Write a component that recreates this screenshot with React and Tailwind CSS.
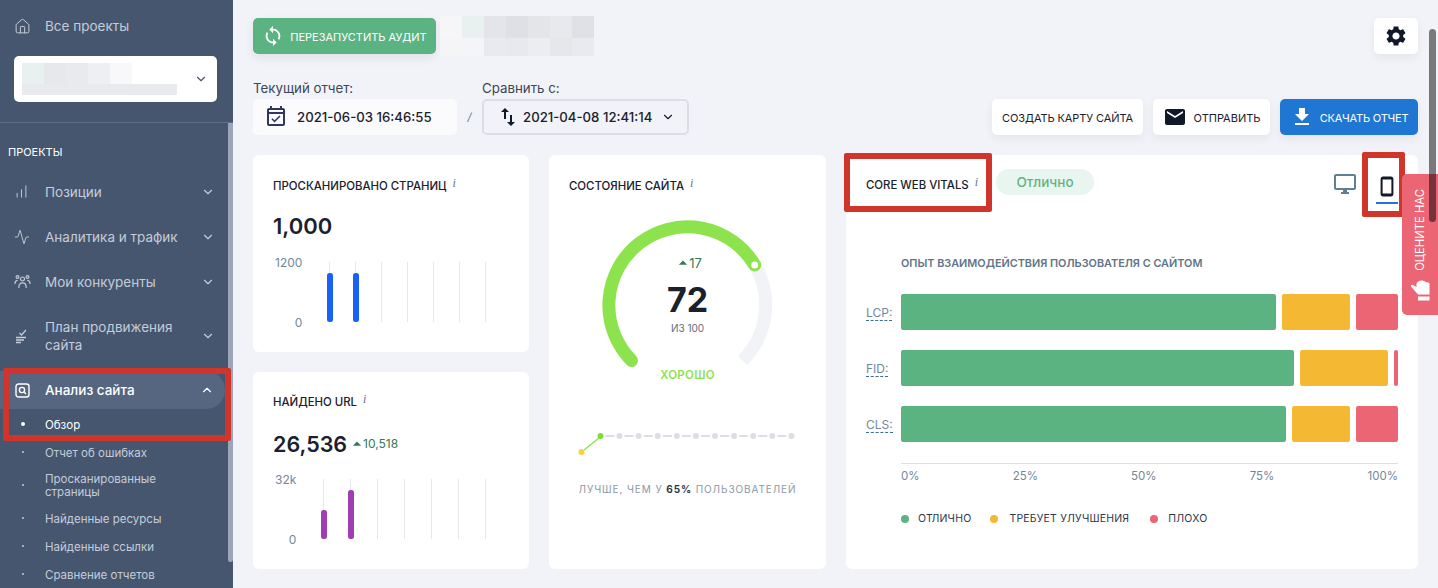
import React from "react";
import { Home, ChartNoAxesColumnIncreasing, Activity, ChevronDown, ChevronUp } from "lucide-react";
import { MdSync, MdSettings, MdEmail, MdFileDownload, MdOutlineDesktopWindows, MdOutlineEventAvailable, MdSwapVert, MdArrowDropUp } from "react-icons/md";

const Info = () => <i className="ml-[6px] relative -top-[3px] text-[12px] font-['Liberation_Serif',serif] text-[#5f7488]">i</i>;

const PlanIcon = () => (
  <svg width="16" height="16" viewBox="0 0 16 16" fill="none" stroke="#c3ccd8" strokeWidth="1.3">
    <path d="M5.5 5 L7.5 7 L12 2" />
    <path d="M2 9.5 H12 M2 12 H10 M2 14.5 H7" />
  </svg>
);

const PeopleIcon = () => (
  <svg width="17" height="16" viewBox="0 0 17 16" fill="none" stroke="#c3ccd8" strokeWidth="1.2" strokeLinecap="round">
    <circle cx="8.5" cy="5" r="2" />
    <circle cx="3.5" cy="3" r="1.4" />
    <circle cx="13.5" cy="3" r="1.4" />
    <path d="M4.8 13.5 C4.8 10.5 6.3 8.8 8.5 8.8 C10.7 8.8 12.2 10.5 12.2 13.5" />
    <path d="M1 9.5 C1 7.5 1.8 6.5 3.2 6.3 M16 9.5 C16 7.5 15.2 6.5 13.8 6.3" />
  </svg>
);

const AuditIcon = () => (
  <svg width="15" height="15" viewBox="0 0 15 15" fill="none" stroke="#fff" strokeWidth="1.4">
    <rect x="1" y="1" width="13" height="13" rx="2.5" />
    <circle cx="7" cy="7" r="2.6" />
    <path d="M9 9 L11 11" />
  </svg>
);

const PhoneIcon = () => (
  <svg width="14" height="21" viewBox="0 0 14 21">
    <path fillRule="evenodd" fill="#111827" d="M3 0.5 H11 C12.4 0.5 13.4 1.5 13.4 3 V18 C13.4 19.5 12.4 20.5 11 20.5 H3 C1.6 20.5 0.6 19.5 0.6 18 V3 C0.6 1.5 1.6 0.5 3 0.5 Z M2.6 3.5 V17.5 H11.4 V3.5 Z" />
  </svg>
);

const HandIcon = () => (
  <svg width="21" height="24" viewBox="0 0 21 24" fill="#fff">
    <path d="M9 1 C11 0 14 0.5 16 2 L19.5 3 V14.5 H8 L1 6.5 C0.5 5.5 1.5 4.5 3 5 L6.5 7 L6.5 4 C6.5 2.5 8 1.5 9 1 Z" />
    <rect x="8" y="16.5" width="11.5" height="4" />
  </svg>
);

const NavItem = ({ icon, children, className = "h-[45px]" }) => (
  <div className={`flex items-center pl-[14px] pr-[18px] text-[#c3ccd8] ${className}`}>
    <span className="w-[31px] flex items-center">{icon}</span>
    <span className="flex-1 text-[13.5px] leading-[18px]">{children}</span>
    <ChevronDown size={14} strokeWidth={2} />
  </div>
);

const SubItem = ({ children, active, className = "h-[28px]" }) => (
  <div className={`flex items-center ${className} ${active ? "text-white" : "text-[#c3ccd8]"}`}>
    <span className="w-[45px] flex justify-center">
      <span className={`block rounded-full ${active ? "w-[4px] h-[4px] bg-white" : "w-[2px] h-[2px] bg-[#c3ccd8]"}`} />
    </span>
    <span className="text-[11.5px] leading-[13px] pt-[2px]">{children}</span>
  </div>
);

const Sidebar = () => (
  <aside className="relative w-[233px] h-[588px] shrink-0 bg-[#47566f] overflow-hidden">
    <div className="flex items-center h-[52px] pl-[14px] text-[#c3ccd8]">
      <span className="w-[31px]"><Home size={17} strokeWidth={1.4} /></span>
      <span className="text-[13.5px]">Все проекты</span>
    </div>
    <div className="ml-[14px] w-[203px] mt-[4px] h-[46px] bg-white rounded-[5px] flex items-center justify-between pl-[8px] pr-[9px]">
      <div className="flex flex-col w-[155px]">
        <div className="flex h-[21px]">
          <span className="w-[22px] bg-[#e8f0f0]" />
          <span className="w-[22px] bg-[#e7e8ec]" />
          <span className="w-[22px] bg-[#e9eaee]" />
          <span className="w-[22px] bg-[#eeeff2]" />
          <span className="w-[22px] bg-[#f8f8fa]" />
        </div>
        <div className="h-[11px] bg-[#e9eaee]" />
      </div>
      <ChevronDown size={14} strokeWidth={2} className="text-[#47566f]" />
    </div>
    <div className="mt-[20px] border-t border-[#5f6f89]" />
    <div className="relative">
      <div className="pl-[8px] pt-[21px] pb-[9px] h-[46px] text-[11px] leading-[16px] text-white">ПРОЕКТЫ</div>
      <NavItem icon={<ChartNoAxesColumnIncreasing size={15} strokeWidth={1.5} />}>Позиции</NavItem>
      <NavItem icon={<Activity size={16} strokeWidth={1.4} />}>Аналитика и трафик</NavItem>
      <NavItem icon={<PeopleIcon />}>Мои конкуренты</NavItem>
      <NavItem icon={<PlanIcon />} className="h-[63px]">План продвижения сайта</NavItem>
      <div className="h-[38px] mt-[4px] w-[225px] bg-[#566680] rounded-r-[20px] flex items-center pl-[15px] pr-[11px] text-white">
        <span className="w-[30px]"><AuditIcon /></span>
        <span className="flex-1 text-[13.5px] font-medium">Анализ сайта</span>
        <ChevronUp size={14} strokeWidth={2} />
      </div>
      <SubItem active className="h-[30px]">Обзор</SubItem>
      <SubItem className="h-[26px]">Отчет об ошибках</SubItem>
      <SubItem className="h-[39px]">Просканированные<br />страницы</SubItem>
      <SubItem>Найденные ресурсы</SubItem>
      <SubItem>Найденные ссылки</SubItem>
      <SubItem>Сравнение отчетов</SubItem>
    </div>
    <div className="absolute right-0 top-[123px] w-[5px] h-[439px] bg-[#9ba6b8] rounded-b-[3px]" />
  </aside>
);

const Pixels = () => (
  <div className="ml-[4px] -mt-[2px] grid grid-cols-[repeat(7,22px)] grid-rows-[22px_18px]">
    {["#f6f6f9","#e8f0f0","#e4e5ea","#dfe0e5","#e4e5e9","#e8e9ed","#e0e1e6","#f5f5f8","#f4f5f8","#e9eaee","#e8e9ed","#ecedf0","#e6e7eb","#e9eaee"].map((c, i) => (
      <span key={i} style={{ backgroundColor: c }} />
    ))}
  </div>
);

const CardTitle = ({ children }) => (
  <div className="text-[11.4px] leading-[16px] font-medium text-[#1a202c]">{children}<Info /></div>
);

const BarChart = ({ top, color, lines, bars, className }) => (
  <div className={`flex h-[60px] ${className}`}>
    <div className="flex flex-col justify-between text-[12px] leading-[12px] text-[#74879a] text-right -mt-[5px] ml-[2px] h-[72px]">
      <span>{top}</span>
      <span>0</span>
    </div>
    <svg width="180" height="60" viewBox="0 0 180 60" className="shrink-0 ml-auto">
      {lines.map((x) => <line key={x} x1={x} x2={x} y1="0" y2="60" stroke="#e6e7ea" strokeWidth="1" />)}
      {bars.map(([x, y]) => <rect key={x} x={x - 3} y={y} width="6" height={60 - y} rx="2.5" fill={color} />)}
    </svg>
  </div>
);

const Delta = ({ children, className }) => (
  <span className={`flex items-center text-[#347a55] ${className}`}>
    <MdArrowDropUp size={20} className="-mr-[4px]" />{children}
  </span>
);

const Gauge = () => (
  <svg width="190" height="170" viewBox="0 0 190 170" className="block">
    <path d="M 161.7 61 A 78.5 78.5 0 0 1 149.5 156.5" fill="none" stroke="#f2f3f7" strokeWidth="13" />
    <path d="M 38.5 156.5 A 78.5 78.5 0 1 1 161.7 61" fill="none" stroke="#8de34d" strokeWidth="13" strokeLinecap="round" />
    <circle cx="161.7" cy="61" r="3.5" fill="#fff" />
  </svg>
);

const Rank = () => (
  <svg width="222" height="30" viewBox="0 0 222 30" className="block">
    <line x1="7" y1="22" x2="22" y2="10" stroke="#8de34d" strokeWidth="1.5" />
    <circle cx="4.5" cy="24" r="3" fill="#fbd134" />
    <circle cx="23.5" cy="8" r="3" fill="#7fdc3c" />
    {Array.from({ length: 10 }).map((_, i) => (
      <rect key={i} x={28.5 + i * 19.1} y="7" width="9" height="2" fill="#dcdde6" />
    ))}
    {Array.from({ length: 10 }).map((_, i) => (
      <circle key={i} cx={42.5 + i * 19.1} cy="8" r="3" fill="#dcdde6" />
    ))}
  </svg>
);

const bars = [
  ["LCP:", 375, 68, 42],
  ["FID:", 393, 88, 4],
  ["CLS:", 385, 58, 42],
];

const Vitals = () => (
  <div className="bg-white rounded-[6px] h-[414px] pl-[20px] pr-[20px]">
    <div className="flex items-start h-[64px] pt-[14px]">
      <div className="pt-[8px]"><CardTitle>CORE WEB VITALS</CardTitle></div>
      <span className="ml-[18px] h-[26px] w-[98px] rounded-full bg-[#e9f6f0] text-[#5cb582] text-[13.5px] font-medium flex items-center justify-center">Отлично</span>
      <div className="ml-auto flex items-start">
        <span className="w-[22px] mt-[3px] flex justify-center"><MdOutlineDesktopWindows size={24} className="text-[#5f8090] shrink-0" /></span>
        <span className="ml-[20px] w-[22px] pt-[7px] flex flex-col items-center">
          <PhoneIcon />
          <span className="mt-[5px] block w-[22px] h-[2px] bg-[#1d76d3]" />
        </span>
      </div>
    </div>
    <div className="pl-[35px] mt-[37px] text-[10.85px] leading-[14px] font-semibold text-[#5f7488]">ОПЫТ ВЗАИМОДЕЙСТВИЯ ПОЛЬЗОВАТЕЛЯ С САЙТОМ</div>
    <div className="mt-[24px] flex flex-col gap-[20px]">
      {bars.map(([label, a, b, c]) => (
        <div key={label} className="flex items-center h-[36px]">
          <span className="w-[35px] pt-[2px] text-[12px] leading-[14px] text-[#74879a]"><span className="border-b border-dashed border-[#3f6c8f]">{label}</span></span>
          <div className="flex gap-[6px] h-full">
            <span className="bg-[#5bb381] rounded-[2px]" style={{ width: a }} />
            <span className="bg-[#f5b833] rounded-[2px]" style={{ width: b }} />
            <span className="bg-[#ec6574] rounded-[2px]" style={{ width: c }} />
          </div>
        </div>
      ))}
    </div>
    <div className="ml-[35px] mt-[21px] border-t border-[#dcdde6] flex justify-between pt-[5px] text-[11.5px] leading-[14px] text-[#74879a]">
      <span>0%</span><span>25%</span><span>50%</span><span>75%</span><span>100%</span>
    </div>
    <div className="ml-[35px] mt-[29px] flex items-center text-[10.5px] tracking-[0.2px] leading-[14px] text-[#2d3748]">
      <span className="w-[8px] h-[8px] rounded-full bg-[#5bb381]" /><span className="ml-[9px]">ОТЛИЧНО</span>
      <span className="ml-[19px] w-[8px] h-[8px] rounded-full bg-[#f5b833]" /><span className="ml-[11px]">ТРЕБУЕТ УЛУЧШЕНИЯ</span>
      <span className="ml-[21px] w-[8px] h-[8px] rounded-full bg-[#ec6574]" /><span className="ml-[10px]">ПЛОХО</span>
    </div>
  </div>
);

const ActionBtn = ({ children, className }) => (
  <button className={`h-[36px] rounded-[5px] flex items-center justify-center text-[11px] shadow-[0_4px_10px_rgba(30,40,70,0.06)] ${className}`}>{children}</button>
);

const Main = () => (
  <main className="flex-1 h-[588px] overflow-hidden bg-[#f2f3f8] px-[20px] pt-[18px]">
    <div className="flex h-[36px]">
      <button className="w-[183px] h-[36px] rounded-[5px] bg-[#5bb381] text-white text-[11px] flex items-center justify-center gap-[6px] shadow-[0_4px_10px_rgba(30,40,70,0.08)]">
        <MdSync size={22} /><span className="mt-[3px]">ПЕРЕЗАПУСТИТЬ АУДИТ</span>
      </button>
      <Pixels />
      <button className="ml-auto w-[44px] h-[36px] rounded-[5px] bg-white flex items-center justify-center shadow-[0_4px_10px_rgba(30,40,70,0.06)]">
        <MdSettings size={24} className="text-[#111827]" />
      </button>
    </div>
    <div className="flex items-end mt-[36px] h-[45px]">
      <div className="w-[204px]">
        <div className="text-[13.3px] leading-[19px] -mt-[1px] mb-[1px] text-[#3d4656]">Текущий отчет:</div>
        <div className="h-[36px] bg-[#fbfbfd] rounded-[5px] flex items-center pl-[11px] text-[13.2px] text-[#1a202c] font-medium">
          <MdOutlineEventAvailable size={24} className="text-[#2e3763] mr-[9px]" /><span className="mt-[2px]">2021-06-03 16:46:55</span>
        </div>
      </div>
      <span className="w-[25px] text-center h-[36px] flex items-center justify-center italic text-[11px] text-[#5f7488]">/</span>
      <div className="w-[207px]">
        <div className="text-[13.3px] leading-[19px] -mt-[1px] mb-[1px] text-[#3d4656]">Сравнить с:</div>
        <div className="h-[36px] rounded-[5px] border-2 border-[#dcdde6] flex items-center pl-[12px] pr-[12px] text-[13.2px] text-[#1a202c] font-medium">
          <MdSwapVert size={24} className="text-[#111827] mr-[3px]" />
          <span className="flex-1 mt-[2px]">2021-04-08 12:41:14</span>
          <ChevronDown size={14} strokeWidth={2} />
        </div>
      </div>
      <div className="ml-auto flex gap-[10px]">
        <ActionBtn className="w-[151px] bg-white text-[#1a202c]"><span className="mt-[3px] tracking-[-0.1px]">СОЗДАТЬ КАРТУ САЙТА</span></ActionBtn>
        <ActionBtn className="w-[117px] bg-white text-[#1a202c] gap-[7px]"><MdEmail size={24} className="text-[#111827]" /><span className="mt-[3px]">ОТПРАВИТЬ</span></ActionBtn>
        <ActionBtn className="w-[138px] bg-[#1f76d3] text-white gap-[6px]"><MdFileDownload size={24} /><span className="mt-[3px] tracking-[-0.2px]">СКАЧАТЬ ОТЧЕТ</span></ActionBtn>
      </div>
    </div>
    <div className="mt-[20px] grid grid-cols-[276px_277px_572px] gap-[20px]">
      <div className="flex flex-col gap-[20px]">
        <div className="h-[197px] bg-white rounded-[6px] pl-[20px] pr-[43px] pt-[23px]">
          <CardTitle>ПРОСКАНИРОВАНО СТРАНИЦ</CardTitle>
          <div className="mt-[17px] text-[22px] leading-[30px] font-semibold text-[#1a202c]">1,000</div>
          <BarChart className="mt-[21px] w-[213px]" top="1200" color="#1a62f5" lines={[23.5,49.5,75.5,101.5,127.5,153.5,179.5]} bars={[[24,11],[50,11]]} />
        </div>
        <div className="h-[197px] bg-white rounded-[6px] pl-[20px] pr-[43px] pt-[22px]">
          <CardTitle>НАЙДЕНО URL</CardTitle>
          <div className="mt-[19px] flex items-center">
            <span className="text-[21.5px] leading-[30px] font-semibold text-[#1a202c]">26,536</span>
            <Delta className="text-[12px]">10,518</Delta>
          </div>
          <BarChart className="mt-[20px] w-[213px]" top="32k" color="#a03db3" lines={[17.5,44.5,71.5,98.5,125.5,152.5,179.5]} bars={[[18,31],[45,11]]} />
        </div>
      </div>
      <div className="h-[414px] bg-white rounded-[6px] pt-[23px] flex flex-col items-center">
        <div className="self-start pl-[20px]"><CardTitle>СОСТОЯНИЕ САЙТА</CardTitle></div>
        <div className="relative mt-[10px] w-[190px] h-[170px]">
          <Gauge />
          <div className="absolute inset-x-0 top-[49px] flex flex-col items-center">
            <Delta className="text-[13px] leading-[18px]">17</Delta>
            <span className="mt-[7px] text-[34px] leading-[40px] font-bold text-[#1a202c]">72</span>
            <span className="mt-[1px] text-[10px] leading-[14px] text-[#5f6b80]">ИЗ 100</span>
          </div>
        </div>
        <div className="-mt-[7px] text-[11.5px] leading-[16px] font-semibold text-[#8de34d] tracking-[0.3px]">ХОРОШО</div>
        <div className="mt-[45px]"><Rank /></div>
        <div className="mt-[24px] text-[10px] leading-[14px] tracking-[0.9px] text-[#8b97a8]">ЛУЧШЕ, ЧЕМ У <b className="text-[#2d3748]">65%</b> ПОЛЬЗОВАТЕЛЕЙ</div>
      </div>
      <Vitals />
    </div>
  </main>
);

export default function App() {
  return (
    <div className="relative flex w-[1438px] h-[588px] overflow-hidden font-['Inter',sans-serif]">
      <Sidebar />
      <Main />
      <div className="absolute left-[3px] top-[368px] w-[228px] h-[73px] border-[6px] border-[#d0352c] rounded-[2px]" />
      <div className="absolute left-[844px] top-[153px] w-[148px] h-[59px] border-[6px] border-[#d0352c] rounded-[2px]" />
      <div className="absolute left-[1362px] top-[152px] w-[43px] h-[65px] border-[6px] border-[#d0352c] rounded-[2px]" />
      <div className="absolute left-[1402px] top-[174px] w-[36px] h-[141px] bg-[#ec6574] rounded-l-[5px] flex flex-col items-center text-white pt-[15px]">
        <span className="[writing-mode:vertical-rl] rotate-180 text-[11.3px] leading-[14px]">ОЦЕНИТЕ НАС</span>
        <span className="mt-[9px] ml-[1px]"><HandIcon /></span>
      </div>
      <div className="absolute left-[1429px] top-[29px] w-[7px] h-[193px] rounded-full bg-black/50" />
    </div>
  );
}
